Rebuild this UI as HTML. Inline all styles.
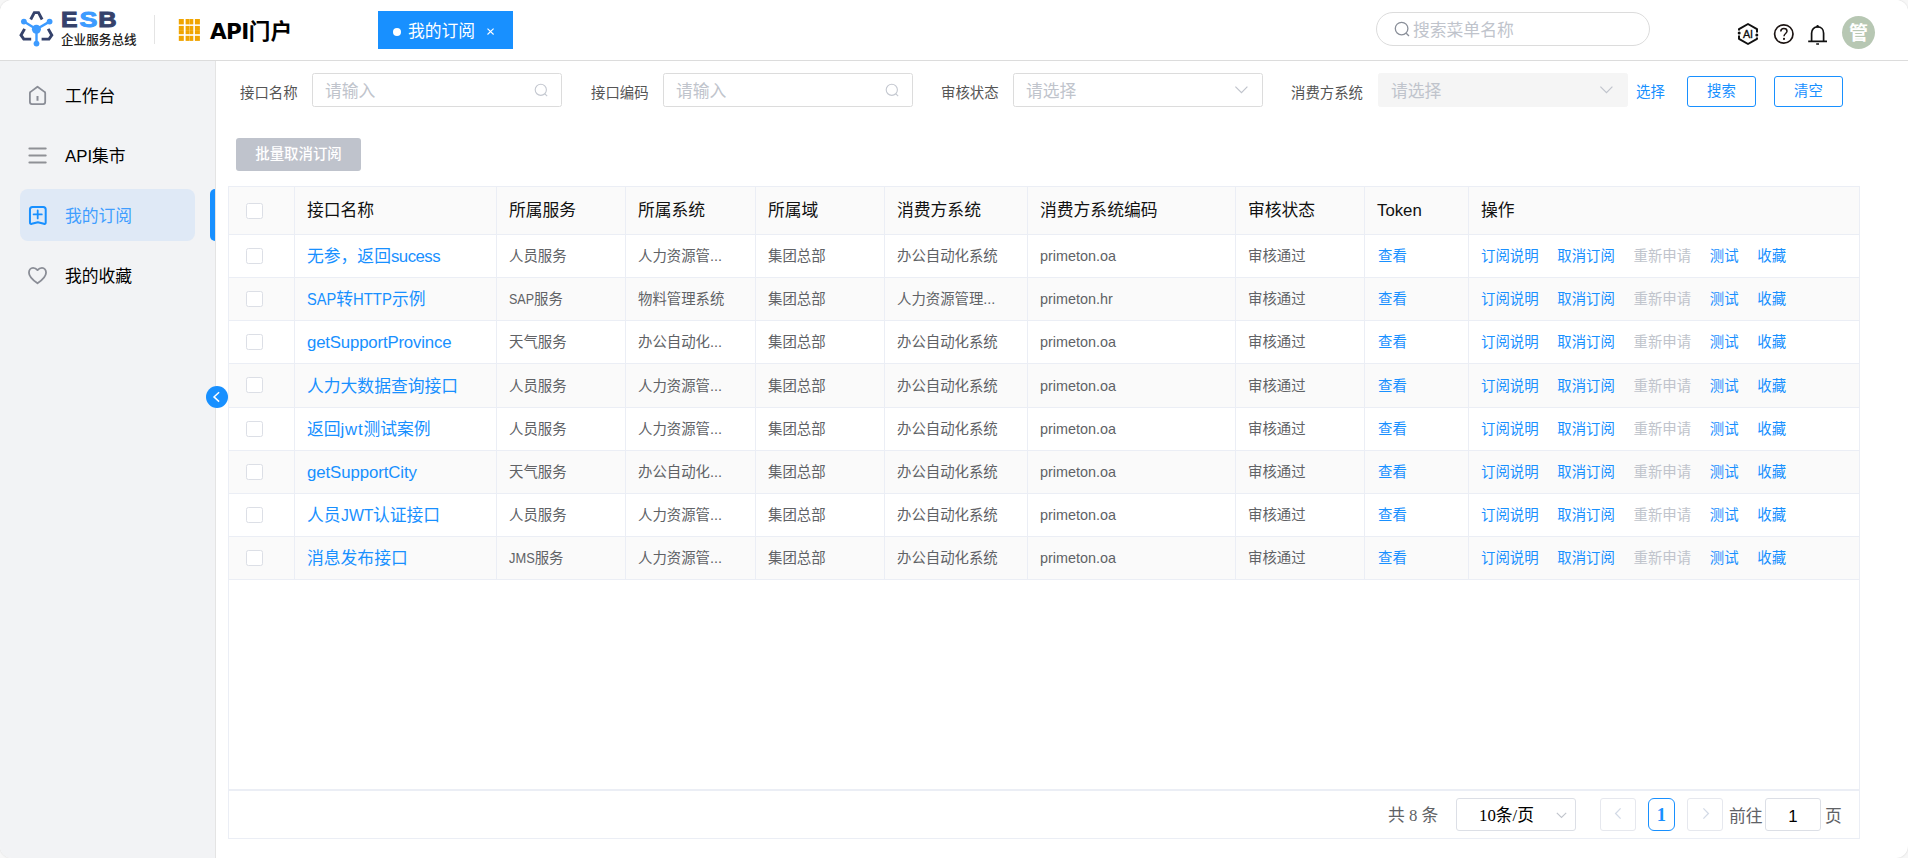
<!DOCTYPE html>
<html lang="zh-CN">
<head>
<meta charset="utf-8">
<title>API门户 - 我的订阅</title>
<style>
*{box-sizing:border-box;margin:0;padding:0}
html,body{width:1908px;height:858px;overflow:hidden;background:#f7f7f7}
body{font-family:"Liberation Sans","Noto Sans CJK SC",sans-serif;color:#000;position:relative}
#app{position:absolute;left:0;top:0;width:1908px;height:858px;background:#fff;border-radius:12px;overflow:hidden;box-shadow:0 0 2px rgba(0,0,0,.16)}
.abs{position:absolute}
/* header */
#hd{position:absolute;left:0;top:0;width:1908px;height:61px;border-bottom:1px solid #dcdcdc;background:#fff}
#logo{position:absolute;left:19px;top:10px}
#esb{position:absolute;left:56px;top:6px}
#esbsub{position:absolute;left:61px;top:31px;font-size:12.6px;line-height:18px;font-weight:500;color:#222;white-space:nowrap}
#hdiv{position:absolute;left:154px;top:15px;width:1px;height:29px;background:#e4e4e4}
#grid{position:absolute;left:178px;top:19px}
#ttl{position:absolute;left:210px;top:16px;font-size:21.6px;line-height:32px;font-weight:700;color:#000;white-space:nowrap}
#tab{position:absolute;left:378px;top:11px;width:135px;height:38px;background:#1890ff;color:#fff;font-size:16.8px;line-height:38px;white-space:nowrap}
#tab i{position:absolute;left:15px;top:17px;width:8px;height:8px;border-radius:50%;background:#fff}
#tab span{position:absolute;left:30px;top:2px}
#tab svg{position:absolute;left:108px;top:16px}
#srch{position:absolute;left:1376px;top:12px;width:274px;height:34px;border:1px solid #dcdcdc;border-radius:17px;font-size:16.8px;line-height:32px;color:#c0c4cc;white-space:nowrap}
#srch svg{position:absolute;left:17px;top:8px}
#srch span{position:absolute;left:36px;top:2px}
#avatar{position:absolute;left:1842px;top:16px;width:33px;height:33px;border-radius:50%;background:#b7c7b3;color:#fff;font-size:19px;font-weight:700;line-height:35px;text-align:center}
/* sidebar */
#sb{position:absolute;left:0;top:61px;width:216px;height:797px;background:#f2f3f5;border-right:1px solid #e4e4e4}
.mi{position:absolute;left:0;width:215px;height:60px;font-size:16.8px;line-height:60px;color:#000;white-space:nowrap}
.mi span{position:absolute;left:65px;top:1px}
.mi svg{position:absolute;left:27px;top:19px}
#mact{position:absolute;left:20px;top:128px;width:175px;height:52px;border-radius:8px;background:#dfe9f6}
#mbar{position:absolute;left:210px;top:128px;width:5px;height:52px;border-radius:5px 0 0 5px;background:#1890ff}
#collapse{position:absolute;left:206px;top:386px;width:22px;height:22px;border-radius:50%;background:#1890ff}
/* filters */
.lbl{position:absolute;top:82px;font-size:14.4px;line-height:22px;color:#555;white-space:nowrap}
.inp{position:absolute;top:73px;width:250px;height:34px;border:1px solid #dcdcdc;border-radius:2.5px;background:#fff;font-size:16.8px;line-height:32px;color:#c0c4cc;white-space:nowrap}
.inp span{position:absolute;left:12px;top:2px}
.inp svg{position:absolute;right:12.4px;top:8.5px}
.inp svg.ar{top:7.5px;right:12.6px}
.inp.dis{background:#f5f5f5;border-color:#f5f5f5}
.btn{position:absolute;top:76px;width:69px;height:31px;border:1px solid #1890ff;border-radius:3px;color:#1890ff;font-size:14.4px;line-height:29px;text-align:center;background:#fff}
#batch{position:absolute;left:236px;top:138px;width:125px;height:33px;border-radius:3px;background:#bfc3cc;color:#fff;font-size:14.4px;font-weight:500;line-height:33px;text-align:center}
/* table */
#tbl{position:absolute;left:228px;top:186px;width:1632px;height:653px;border:1px solid #ebeef5}
.row{position:absolute;left:0;width:1630px;border-bottom:1px solid #ebeef5;background:#fff}
.row.h{top:0;height:48px;background:#fafafa;font-size:16.8px;color:#111}
.row.s{background:#fafafa}
.c{position:absolute;top:0;height:100%;border-right:1px solid #ebeef5;padding-left:12px;white-space:nowrap;overflow:hidden;font-size:14.4px;color:#606266;line-height:42px}
.h .c{font-size:16.8px;color:#111;line-height:47px}
.c.n{font-size:16.8px;color:#1890ff;line-height:44px}
.c span.x{display:inline-block;transform-origin:0 50%}
.c a{color:#1890ff;margin-right:18.7px}
.c a.d{color:#c0c4cc}
.c:last-child{border-right:0}
.r4 .c{line-height:44px}.r4 .c.n{line-height:46px}.r4 .cb{top:13px}
.cb{position:absolute;left:17px;width:17px;height:16px;border:1px solid #dcdfe6;border-radius:2.4px;background:#fff}
.c0{left:0;width:66px}.c1{left:66px;width:202px}.c2{left:268px;width:129px}.c3{left:397px;width:130px}.c4{left:527px;width:129px}
.c5{left:656px;width:143px}.c6{left:799px;width:208px}.c7{left:1007px;width:129px}.c8{left:1136px;width:104px}.row:not(.h) .c8{padding-left:13px}.c9{left:1240px;width:390px}
/* pagination */
#pg{position:absolute;left:0;top:602px;width:1630px;height:49px;border-top:2px solid #ebeef5;font-size:16.8px;color:#606266;white-space:nowrap}
.pb{position:absolute;top:7px;height:33px;border:1px solid #e6e8ee;border-radius:3px;background:#fff}
.sf{font-family:"Liberation Serif","Noto Sans CJK SC",serif}
</style>
</head>
<body>
<div id="app">
<div id="hd">
  <svg id="logo" width="36" height="38" viewBox="0 0 36 38">
    <g fill="none" stroke="#35426b" stroke-width="2.9" stroke-linejoin="miter">
      <path d="M11.7 9.5 L15.3 2.6 L19.5 2.6 L23.1 9.5"/>
      <path d="M5.6 18.9 L2 25.2 L4.8 29.1 L12.2 29.1"/>
      <path d="M29.2 18.9 L32.8 25.2 L30 29.1 L22.6 29.1"/>
    </g>
    <g stroke="#3d9bff" stroke-width="2.4" fill="none">
      <path d="M17.4 19.3 L4.9 11.6 M17.4 19.3 L30.6 11.6 M17.5 19.3 L17.5 33.6"/>
    </g>
    <g fill="#3d9bff">
      <circle cx="17.4" cy="19.3" r="4.5"/><circle cx="4.9" cy="11.6" r="2.9"/><circle cx="30.6" cy="11.6" r="2.9"/><circle cx="17.5" cy="33.6" r="2.9"/>
    </g>
  </svg>
  <svg id="esb" width="70" height="24" viewBox="56 6 70 24" font-family="Liberation Sans,sans-serif" font-size="21.2" font-weight="700" stroke-width=".9" stroke-linejoin="miter">
    <text transform="translate(60.96,26.65) scale(1.17,1)" fill="#35426b" stroke="#35426b">E</text>
    <text transform="translate(79.5,26.65) scale(1.27,1)" fill="#3d9bff" stroke="#3d9bff">S</text>
    <text transform="translate(98.3,26.65) scale(1.2,1)" fill="#35426b" stroke="#35426b">B</text>
  </svg>
  <div id="esbsub">企业服务总线</div>
  <div id="hdiv"></div>
  <svg id="grid" width="24" height="23" viewBox="0 0 24 23" fill="#f0a400"><rect x="0.8" y="0.0" width="5.0" height="5.4"/><rect x="7.6" y="0.0" width="3.8" height="5.4"/><rect x="11.5" y="0.0" width="3.8" height="5.4"/><rect x="16.9" y="0.0" width="5.0" height="5.4"/><rect x="0.8" y="6.9" width="5.0" height="4.1"/><rect x="7.6" y="6.9" width="3.8" height="4.1"/><rect x="11.5" y="6.9" width="3.8" height="4.1"/><rect x="16.9" y="6.9" width="5.0" height="4.1"/><rect x="0.8" y="11.1" width="5.0" height="4.1"/><rect x="7.6" y="11.1" width="3.8" height="4.1"/><rect x="11.5" y="11.1" width="3.8" height="4.1"/><rect x="16.9" y="11.1" width="5.0" height="4.1"/><rect x="0.8" y="16.8" width="5.0" height="5.1"/><rect x="7.6" y="16.8" width="3.8" height="5.1"/><rect x="11.5" y="16.8" width="3.8" height="5.1"/><rect x="16.9" y="16.8" width="5.0" height="5.1"/></svg>
  <div id="ttl"><span style="font-family:'DejaVu Sans',sans-serif;letter-spacing:-.6px">API</span>门户</div>
  <div id="tab"><i></i><span>我的订阅</span>
    <svg width="9" height="9" viewBox="0 0 9 9"><path d="M1.5 1.6 L7.6 7.5 M7.6 1.6 L1.5 7.5" stroke="#fff" stroke-width="1.1" fill="none"/></svg>
  </div>
  <div id="srch">
    <svg width="17" height="17" viewBox="0 0 17 17"><circle cx="7.6" cy="7.6" r="6.3" fill="none" stroke="#8a8f99" stroke-width="1.3"/><path d="M12.2 12.2 L15 15" stroke="#8a8f99" stroke-width="1.3"/></svg>
    <span>搜索菜单名称</span>
  </div>
  <!-- AI icon -->
  <svg class="abs" style="left:1736px;top:22px" width="24" height="24" viewBox="0 0 24 24">
    <path d="M3 8.6 L3 7.2 L12 2 L21 7.2 L21 10.4 M21 15.6 L21 16.8 L12 22 L3 16.8 L3 13.4" fill="none" stroke="#111" stroke-width="2" stroke-linejoin="round"/>
    <circle cx="3.2" cy="11.1" r="1.5" fill="#111"/><circle cx="20.8" cy="13.1" r="1.5" fill="#111"/>
    <text x="12" y="16" text-anchor="middle" font-family="Liberation Sans,sans-serif" font-size="10.8" fill="#111" stroke="#111" stroke-width=".35">AI</text>
  </svg>
  <!-- help icon -->
  <svg class="abs" style="left:1772px;top:22px" width="24" height="24" viewBox="0 0 24 24">
    <circle cx="11.8" cy="12" r="9.2" fill="none" stroke="#1d1513" stroke-width="1.7"/>
    <path d="M8.8 9.6 C8.8 7.6 10.2 6.6 11.9 6.6 C13.7 6.6 15 7.7 15 9.3 C15 11.4 12 11.6 12 14.2" fill="none" stroke="#1d1513" stroke-width="1.5"/>
    <circle cx="12" cy="16.9" r="1.05" fill="#1d1513"/>
  </svg>
  <!-- bell icon -->
  <svg class="abs" style="left:1806px;top:22px" width="24" height="24" viewBox="0 0 24 24">
    <path d="M5.6 19.2 L5.6 11.2 C5.6 7.4 8.2 4.9 11.6 4.9 C15 4.9 17.6 7.4 17.6 11.2 L17.6 19.2" fill="none" stroke="#111" stroke-width="1.7"/>
    <path d="M2.2 19.3 L21 19.3" stroke="#111" stroke-width="1.7"/>
    <path d="M10.2 22 L13 22" stroke="#111" stroke-width="1.3"/>
    <circle cx="11.6" cy="4.3" r="1.2" fill="#111"/>
  </svg>
  <div id="avatar">管</div>
</div>

<div id="sb">
  <div id="mact"></div><div id="mbar"></div>
  <div class="mi" style="top:5px">
    <svg width="22" height="22" viewBox="0 0 22 22"><path d="M2.9 7.9 Q2.9 7.3 3.6 6.9 L10.5 1.7 L17.5 6.9 Q18.2 7.3 18.2 7.9 L18.2 17.1 Q18.2 19.1 16.2 19.1 L4.9 19.1 Q2.9 19.1 2.9 17.1 Z" fill="none" stroke="#8a8d96" stroke-width="1.8" stroke-linejoin="round"/><path d="M10.5 11 L10.5 15.7" stroke="#8a8d96" stroke-width="2"/></svg>
    <span>工作台</span></div>
  <div class="mi" style="top:65px">
    <svg width="22" height="22" viewBox="0 0 22 22"><path d="M2.4 3.5 L18.7 3.5 M2.4 10.5 L18.7 10.5 M2.4 17.5 L18.7 17.5" stroke="#8f9196" stroke-width="2" stroke-linecap="round"/></svg>
    <span>API集市</span></div>
  <div class="mi" style="top:125px;color:#409eff">
    <svg width="22" height="22" viewBox="0 0 22 22"><path d="M2.96 4.4 Q2.96 1.9 5.5 1.9 L16.2 1.9 Q18.7 1.9 18.7 4.4 L18.7 17.4 Q18.7 19.4 16.9 18.8 L10.83 17.3 L4.76 18.8 Q2.96 19.4 2.96 17.4 Z" fill="none" stroke="#1890ff" stroke-width="2" stroke-linejoin="round"/><path d="M10.7 5.4 L10.7 13.4 M6.6 9.4 L14.8 9.4" stroke="#1890ff" stroke-width="1.8" stroke-linecap="round"/></svg>
    <span>我的订阅</span></div>
  <div class="mi" style="top:185px">
    <svg width="22" height="22" viewBox="0 0 22 22"><path d="M10.5 5.1 C9.3 3.6 7.8 2.8 6.06 2.8 C3.6 2.8 1.96 4.9 1.96 7.7 C1.96 11.5 5.5 14.8 10.5 18.3 C15.5 14.8 19.05 11.5 19.05 7.7 C19.05 4.9 17.4 2.8 15 2.8 C13.2 2.8 11.7 3.6 10.5 5.1 Z" fill="none" stroke="#8a8d96" stroke-width="1.8" stroke-linejoin="round"/></svg>
    <span>我的收藏</span></div>
</div>
<div id="collapse"><svg width="22" height="22" viewBox="0 0 22 22"><path d="M13.1 6.2 L8 10.9 L13.1 15.6" fill="none" stroke="#fff" stroke-width="1.5"/></svg></div>

<!-- filters -->
<div class="lbl" style="left:240px">接口名称</div>
<div class="inp" style="left:312px"><span>请输入</span><svg width="15" height="15" viewBox="0 0 15 15"><circle cx="6.8" cy="6.8" r="5.6" fill="none" stroke="#c4c8d0" stroke-width="1.1"/><path d="M10.9 10.9 L13.2 13.2" stroke="#c4c8d0" stroke-width="1.1"/></svg></div>
<div class="lbl" style="left:591px">接口编码</div>
<div class="inp" style="left:663px"><span>请输入</span><svg width="15" height="15" viewBox="0 0 15 15"><circle cx="6.8" cy="6.8" r="5.6" fill="none" stroke="#c4c8d0" stroke-width="1.1"/><path d="M10.9 10.9 L13.2 13.2" stroke="#c4c8d0" stroke-width="1.1"/></svg></div>
<div class="lbl" style="left:941px">审核状态</div>
<div class="inp" style="left:1013px"><span>请选择</span><svg class="ar" width="15" height="15" viewBox="0 0 15 15"><path d="M1.4 4.6 L7.5 10.6 L13.4 4.6" fill="none" stroke="#c0c4cc" stroke-width="1.2"/></svg></div>
<div class="lbl" style="left:1291px">消费方系统</div>
<div class="inp dis" style="left:1378px"><span>请选择</span><svg class="ar" width="15" height="15" viewBox="0 0 15 15"><path d="M1.4 4.6 L7.5 10.6 L13.4 4.6" fill="none" stroke="#c0c4cc" stroke-width="1.2"/></svg></div>
<div class="lbl" style="left:1636px;top:81px;color:#1890ff">选择</div>
<div class="btn" style="left:1687px">搜索</div>
<div class="btn" style="left:1774px">清空</div>
<div id="batch">批量取消订阅</div>

<!-- table -->
<div id="tbl">
  <div class="row h">
    <div class="c c0"><i class="cb" style="top:16px"></i></div><div class="c c1">接口名称</div><div class="c c2">所属服务</div><div class="c c3">所属系统</div><div class="c c4">所属域</div><div class="c c5">消费方系统</div><div class="c c6">消费方系统编码</div><div class="c c7">审核状态</div><div class="c c8">Token</div><div class="c c9">操作</div>
  </div>
  <div class="row" style="top:48px;height:43px">
    <div class="c c0"><i class="cb" style="top:13px"></i></div><div class="c c1 n">无参，返回<span style="letter-spacing:-.5px">sucess</span></div><div class="c c2">人员服务</div><div class="c c3">人力资源管...</div><div class="c c4">集团总部</div><div class="c c5">办公自动化系统</div><div class="c c6">primeton.oa</div><div class="c c7">审核通过</div><div class="c c8"><a>查看</a></div><div class="c c9"><a>订阅说明</a><a>取消订阅</a><a class="d">重新申请</a><a>测试</a><a>收藏</a></div>
  </div>
  <div class="row s" style="top:91px;height:43px">
    <div class="c c0"><i class="cb" style="top:13px"></i></div><div class="c c1 n"><span class="x" style="transform:scaleX(0.87);margin-right:-4.4px">SAP</span>转<span class="x" style="transform:scaleX(0.888);margin-right:-4.9px">HTTP</span>示例</div><div class="c c2"><span class="x" style="transform:scaleX(0.87);margin-right:-3.7px">SAP</span>服务</div><div class="c c3">物料管理系统</div><div class="c c4">集团总部</div><div class="c c5">人力资源管理...</div><div class="c c6">primeton.hr</div><div class="c c7">审核通过</div><div class="c c8"><a>查看</a></div><div class="c c9"><a>订阅说明</a><a>取消订阅</a><a class="d">重新申请</a><a>测试</a><a>收藏</a></div>
  </div>
  <div class="row" style="top:134px;height:43px">
    <div class="c c0"><i class="cb" style="top:13px"></i></div><div class="c c1 n"><span style="letter-spacing:-.17px">getSupportProvince</span></div><div class="c c2">天气服务</div><div class="c c3">办公自动化...</div><div class="c c4">集团总部</div><div class="c c5">办公自动化系统</div><div class="c c6">primeton.oa</div><div class="c c7">审核通过</div><div class="c c8"><a>查看</a></div><div class="c c9"><a>订阅说明</a><a>取消订阅</a><a class="d">重新申请</a><a>测试</a><a>收藏</a></div>
  </div>
  <div class="row s r4" style="top:177px;height:44px">
    <div class="c c0"><i class="cb" style="top:13px"></i></div><div class="c c1 n">人力大数据查询接口</div><div class="c c2">人员服务</div><div class="c c3">人力资源管...</div><div class="c c4">集团总部</div><div class="c c5">办公自动化系统</div><div class="c c6">primeton.oa</div><div class="c c7">审核通过</div><div class="c c8"><a>查看</a></div><div class="c c9"><a>订阅说明</a><a>取消订阅</a><a class="d">重新申请</a><a>测试</a><a>收藏</a></div>
  </div>
  <div class="row" style="top:221px;height:43px">
    <div class="c c0"><i class="cb" style="top:13px"></i></div><div class="c c1 n">返回<span style="letter-spacing:.8px">jwt</span>测试案例</div><div class="c c2">人员服务</div><div class="c c3">人力资源管...</div><div class="c c4">集团总部</div><div class="c c5">办公自动化系统</div><div class="c c6">primeton.oa</div><div class="c c7">审核通过</div><div class="c c8"><a>查看</a></div><div class="c c9"><a>订阅说明</a><a>取消订阅</a><a class="d">重新申请</a><a>测试</a><a>收藏</a></div>
  </div>
  <div class="row s" style="top:264px;height:43px">
    <div class="c c0"><i class="cb" style="top:13px"></i></div><div class="c c1 n"><span style="letter-spacing:-.08px">getSupportCity</span></div><div class="c c2">天气服务</div><div class="c c3">办公自动化...</div><div class="c c4">集团总部</div><div class="c c5">办公自动化系统</div><div class="c c6">primeton.oa</div><div class="c c7">审核通过</div><div class="c c8"><a>查看</a></div><div class="c c9"><a>订阅说明</a><a>取消订阅</a><a class="d">重新申请</a><a>测试</a><a>收藏</a></div>
  </div>
  <div class="row" style="top:307px;height:43px">
    <div class="c c0"><i class="cb" style="top:13px"></i></div><div class="c c1 n">人员<span class="x" style="transform:scaleX(0.94);margin-right:-2.1px">JWT</span>认证接口</div><div class="c c2">人员服务</div><div class="c c3">人力资源管...</div><div class="c c4">集团总部</div><div class="c c5">办公自动化系统</div><div class="c c6">primeton.oa</div><div class="c c7">审核通过</div><div class="c c8"><a>查看</a></div><div class="c c9"><a>订阅说明</a><a>取消订阅</a><a class="d">重新申请</a><a>测试</a><a>收藏</a></div>
  </div>
  <div class="row s" style="top:350px;height:43px">
    <div class="c c0"><i class="cb" style="top:13px"></i></div><div class="c c1 n">消息发布接口</div><div class="c c2"><span class="x" style="transform:scaleX(0.893);margin-right:-3.1px">JMS</span>服务</div><div class="c c3">人力资源管...</div><div class="c c4">集团总部</div><div class="c c5">办公自动化系统</div><div class="c c6">primeton.oa</div><div class="c c7">审核通过</div><div class="c c8"><a>查看</a></div><div class="c c9"><a>订阅说明</a><a>取消订阅</a><a class="d">重新申请</a><a>测试</a><a>收藏</a></div>
  </div>

  <div id="pg">
    <span class="abs sf" style="left:1159px;top:8px;line-height:34px">共 8 条</span>
    <div class="pb" style="left:1227px;width:120px;border-color:#dcdfe6"><span class="abs sf" style="left:22px;top:1px;line-height:32px;color:#000">10条/页</span><svg class="abs" style="left:98px;top:10px" width="13" height="13" viewBox="0 0 13 13"><path d="M1.8 3.8 L6.5 8.4 L11.2 3.8" fill="none" stroke="#c0c4cc" stroke-width="1.1"/></svg></div>
    <div class="pb" style="left:1371px;width:36px"><svg class="abs" style="left:11px;top:8px" width="13" height="13" viewBox="0 0 13 13"><path d="M8.6 1.4 L3.6 6.5 L8.6 11.6" fill="none" stroke="#d3dae6" stroke-width="1.3"/></svg></div>
    <div class="pb sf" style="left:1419px;width:27px;border-color:#1890ff;border-radius:6px;color:#1890ff;font-weight:700;font-size:18.6px;line-height:32px;text-align:center">1</div>
    <div class="pb" style="left:1458px;width:36px"><svg class="abs" style="left:11px;top:8px" width="13" height="13" viewBox="0 0 13 13"><path d="M4.4 1.4 L9.4 6.5 L4.4 11.6" fill="none" stroke="#d3dae6" stroke-width="1.3"/></svg></div>
    <span class="abs" style="left:1500px;top:9px;line-height:34px">前往</span>
    <div class="pb" style="left:1536px;width:56px;border-color:#dcdfe6;color:#000;text-align:center;line-height:35px;font-size:16.8px">1</div>
    <span class="abs" style="left:1596px;top:9px;line-height:34px">页</span>
  </div>
</div>
</div>
</body>
</html>
